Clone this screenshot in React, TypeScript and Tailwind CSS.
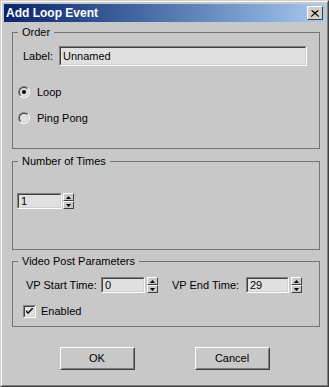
import type { ReactNode } from "react";

function Sunken({ className, children }: { className?: string; children?: ReactNode }) {
  return (
    <div className={`border border-t-[#808080] border-l-[#808080] border-b-white border-r-white ${className ?? ""}`}>
      <div className="flex h-full w-full items-center border border-t-[#404040] border-l-[#404040] border-b-[#d4d0c8] border-r-[#d4d0c8] bg-[#e0e0e0] pl-[2px] leading-none">
        {children}
      </div>
    </div>
  );
}

function Spinner() {
  return (
    <div className="flex h-[16px] w-[11px] flex-col">
      {[0, 1].map((i) => (
        <div
          key={i}
          className="flex h-[8px] items-center justify-center border border-t-white border-l-white border-b-[#404040] border-r-[#404040] bg-[#c8c8c8]"
        >
          <svg width="5" height="3" viewBox="0 0 5 3">
            {i === 0 ? <path d="M0 3 L2.5 0 L5 3 Z" fill="#000" /> : <path d="M0 0 L2.5 3 L5 0 Z" fill="#000" />}
          </svg>
        </div>
      ))}
    </div>
  );
}

function Radio({ checked }: { checked?: boolean }) {
  return (
    <div className="h-[12px] w-[12px] rounded-full border border-t-[#808080] border-l-[#808080] border-b-white border-r-white">
      <div className="flex h-full w-full items-center justify-center rounded-full border border-t-[#404040] border-l-[#404040] border-b-[#d4d0c8] border-r-[#d4d0c8] bg-[#e0e0e0]">
        {checked && <div className="h-[4px] w-[4px] rounded-full bg-black" />}
      </div>
    </div>
  );
}

function Group({ title, className, children }: { title: string; className: string; children: ReactNode }) {
  return (
    <fieldset className={`ml-[8px] mr-[5px] border border-[#747474] ${className}`}>
      <legend className="ml-[5px] pl-[4px] pr-[4px] text-[11px] leading-[14px]">{title}</legend>
      {children}
    </fieldset>
  );
}

function Button({ label }: { label: string }) {
  return (
    <div className="h-[23px] w-[75px] border border-t-white border-l-white border-b-[#404040] border-r-[#404040]">
      <div className="flex h-full w-full items-center justify-center border border-transparent border-b-[#808080] border-r-[#808080] text-[11px]">
        {label}
      </div>
    </div>
  );
}

export default function App() {
  return (
    <div className="h-[387px] w-[329px] border border-t-[#d4d0c8] border-l-[#d4d0c8] border-b-[#404040] border-r-[#404040] font-['Liberation_Sans',Arial,sans-serif] text-black">
      <div className="h-full w-full border border-t-white border-l-white border-b-[#808080] border-r-[#808080] bg-[#c8c8c8] p-[2px]">
        <div className="flex h-[18px] items-center bg-gradient-to-r from-[#0a246a] to-[#a6caf0] pl-[2px] pr-[2px]">
          <span className="text-[12px] font-bold text-white">Add Loop Event</span>
          <div className="ml-auto flex h-[14px] w-[16px] items-center justify-center border border-t-white border-l-white border-b-[#404040] border-r-[#404040] bg-[#d4d0c8]">
            <svg width="8" height="7" viewBox="0 0 8 7">
              <path d="M0.5 0.5 L7.5 6.5 M1.5 0.5 L8 6.5 M7.5 0.5 L0.5 6.5 M6.5 0.5 L0 6.5" stroke="#000" strokeWidth="1" />
            </svg>
          </div>
        </div>

        <Group title="Order" className="mt-[3px] h-[124px]">
          <div className="mt-[7px] flex h-[20px] items-center pl-[10px] text-[11px]">
            <span className="w-[36px]">Label:</span>
            <Sunken className="h-[20px] w-[248px]">Unnamed</Sunken>
          </div>
          <div className="mt-[20px] flex h-[12px] items-center gap-[7px] pl-[5px] text-[11px]">
            <Radio checked />
            <span>Loop</span>
          </div>
          <div className="mt-[14px] flex h-[12px] items-center gap-[7px] pl-[5px] text-[11px]">
            <Radio />
            <span>Ping Pong</span>
          </div>
        </Group>

        <Group title="Number of Times" className="mt-[5px] h-[96px]">
          <div className="mt-[25px] flex items-center gap-[1px] pl-[4px] text-[11px]">
            <Sunken className="h-[16px] w-[45px]">1</Sunken>
            <Spinner />
          </div>
        </Group>

        <Group title="Video Post Parameters" className="mt-[4px] h-[73px]">
          <div className="mt-[9px] flex h-[16px] items-center pl-[13px] text-[11px]">
            <span className="w-[75px]">VP Start Time:</span>
            <Sunken className="h-[16px] w-[44px]">0</Sunken>
            <div className="ml-[2px]">
              <Spinner />
            </div>
            <span className="ml-[14px] w-[74px]">VP End Time:</span>
            <Sunken className="h-[16px] w-[43px]">29</Sunken>
            <div className="ml-[2px]">
              <Spinner />
            </div>
          </div>
          <div className="mt-[12px] flex h-[13px] items-center pl-[10px] text-[11px]">
            <div className="h-[13px] w-[13px] border border-t-[#808080] border-l-[#808080] border-b-white border-r-white">
              <div className="flex h-full w-full items-center justify-center border border-t-[#404040] border-l-[#404040] border-b-[#d4d0c8] border-r-[#d4d0c8] bg-[#e0e0e0]">
                <svg width="7" height="7" viewBox="0 0 7 7">
                  <path d="M0 2 L0 4 L2 6 L7 1 L7 -1 L2 4 Z" fill="#000" />
                </svg>
              </div>
            </div>
            <span className="ml-[5px]">Enabled</span>
          </div>
        </Group>

        <div className="mt-[20px] flex justify-center gap-[60px]">
          <Button label="OK" />
          <Button label="Cancel" />
        </div>
      </div>
    </div>
  );
}
